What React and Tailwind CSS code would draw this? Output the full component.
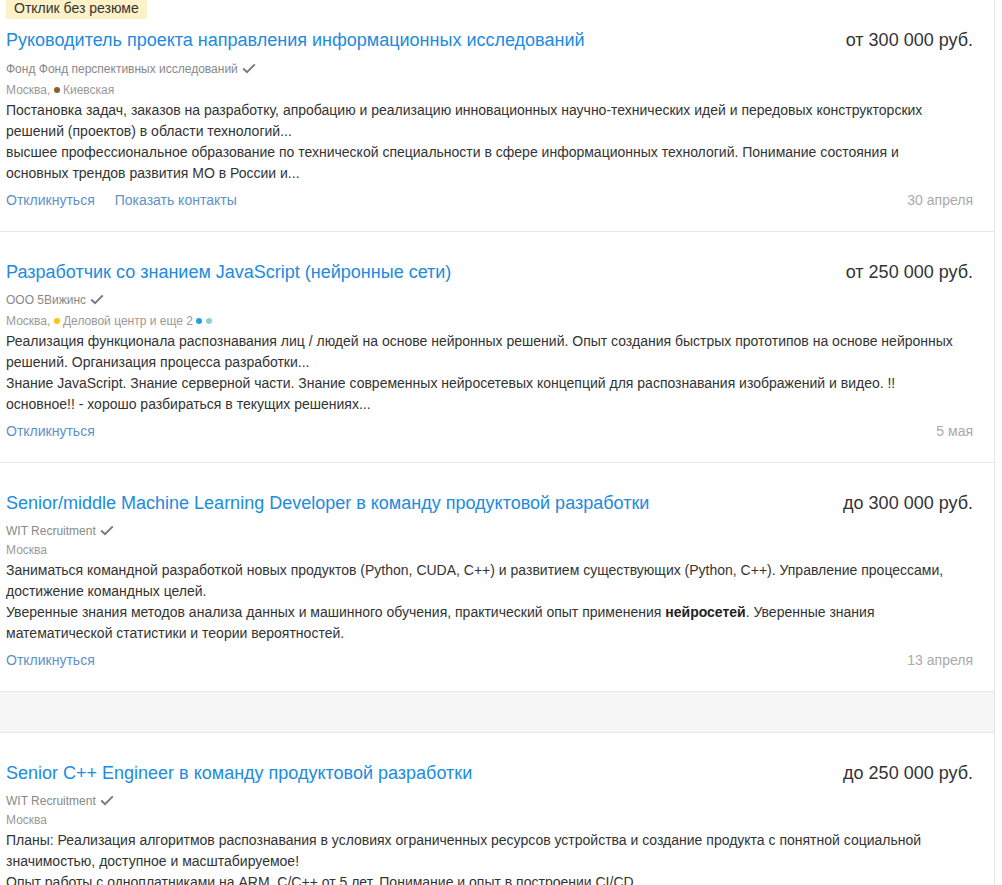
import React from 'react'

const font = { fontFamily: '"Liberation Sans", Arial, sans-serif' }

function Check() {
  return (
    <svg width="14" height="11" viewBox="0 0 14 11" className="inline-block ml-1 -mt-[2px] align-middle">
      <path d="M1.2 5.6 L5 9.2 L12.8 1.4" fill="none" stroke="#7b7b7b" strokeWidth="2" />
    </svg>
  )
}

function Dot({ color }) {
  return <span className={`inline-block w-1.5 h-1.5 rounded-full align-middle -mt-[2px] ${color}`} />
}

const vacancies = [
  {
    badge: true,
    title: 'Руководитель проекта направления информационных исследований',
    salary: 'от 300 000 руб.',
    company: 'Фонд Фонд перспективных исследований',
    location: (
      <>Москва, <Dot color="bg-[#8d5b2d]" /> Киевская</>
    ),
    metro: true,
    lines: [
      'Постановка задач, заказов на разработку, апробацию и реализацию инновационных научно-технических идей и передовых конструкторских',
      'решений (проектов) в области технологий...',
      'высшее профессиональное образование по технической специальности в сфере информационных технологий. Понимание состояния и',
      'основных трендов развития МО в России и...',
    ],
    contacts: true,
    date: '30 апреля',
  },
  {
    title: 'Разработчик со знанием JavaScript (нейронные сети)',
    salary: 'от 250 000 руб.',
    company: 'ООО 5Вижинс',
    location: (
      <>Москва, <Dot color="bg-[#ffc20e]" /> Деловой центр и еще 2 <Dot color="bg-[#1fa3e4]" /> <Dot color="bg-[#8fd0d4]" /></>
    ),
    metro: true,
    lines: [
      'Реализация функционала распознавания лиц / людей на основе нейронных решений. Опыт создания быстрых прототипов на основе нейронных',
      'решений. Организация процесса разработки...',
      'Знание JavaScript. Знание серверной части. Знание современных нейросетевых концепций для распознавания изображений и видео. !!',
      'основное!! - хорошо разбираться в текущих решениях...',
    ],
    date: '5 мая',
  },
  {
    title: 'Senior/middle Machine Learning Developer в команду продуктовой разработки',
    salary: 'до 300 000 руб.',
    company: 'WIT Recruitment',
    location: 'Москва',
    lines: [
      'Заниматься командной разработкой новых продуктов (Python, CUDA, C++) и развитием существующих (Python, C++). Управление процессами,',
      'достижение командных целей.',
      <>Уверенные знания методов анализа данных и машинного обучения, практический опыт применения <b className="font-bold text-[#222]">нейросетей</b>. Уверенные знания</>,
      'математической статистики и теории вероятностей.',
    ],
    date: '13 апреля',
    gapAfter: true,
  },
  {
    title: 'Senior C++ Engineer в команду продуктовой разработки',
    salary: 'до 250 000 руб.',
    company: 'WIT Recruitment',
    location: 'Москва',
    lines: [
      'Планы: Реализация алгоритмов распознавания в условиях ограниченных ресурсов устройства и создание продукта с понятной социальной',
      'значимостью, доступное и масштабируемое!',
      'Опыт работы с одноплатниками на ARM, C/C++ от 5 лет. Понимание и опыт в построении CI/CD',
      'процессов...',
    ],
    date: '10 апреля',
  },
]

function Vacancy({ v, first }) {
  return (
    <div className={`border-b border-[#e6e6e6] pl-[6px] pr-[21px] pb-[21px] ${first ? '' : 'pt-7'}`}>
      {v.badge && (
        <div className="block w-fit bg-[#fdf1c8] text-[#333] text-[14px] leading-4 px-2 pb-[3px]">Отклик без резюме</div>
      )}
      <div className={`flex items-start justify-between gap-6 ${first ? 'mt-[9px]' : ''}`}>
        <a className="text-[18px] leading-6 text-[#208be0]">{v.title}</a>
        <span className="text-[18px] leading-6 text-[#333] whitespace-nowrap">{v.salary}</span>
      </div>
      <div className={`text-[12px] leading-[18px] text-[#888] ${first ? 'mt-2' : 'mt-[7px]'}`}>
        {v.company}
        <Check />
      </div>
      <div className={`text-[12px] leading-5 text-[#999] ${v.metro ? 'mt-[2px]' : ''}`}>{v.location}</div>
      <div className="text-[14px] leading-[21px] text-[#333]">
        {v.lines.map((l, i) => (
          <div key={i} className="whitespace-nowrap">{l}</div>
        ))}
      </div>
      <div className="mt-[6px] flex items-center justify-between text-[14px] leading-5">
        <div className="flex gap-5 text-[#5d92c9]">
          <a>Откликнуться</a>
          {v.contacts && <a>Показать контакты</a>}
        </div>
        <span className="text-[#aaa]">{v.date}</span>
      </div>
    </div>
  )
}

export default function App() {
  return (
    <div className="h-[885px] overflow-hidden bg-white" style={font}>
      <div className="w-[995px] h-full border-r border-[#e6e6e6] bg-white">
        {vacancies.map((v, i) => (
          <React.Fragment key={i}>
            <Vacancy v={v} first={i === 0} />
            {v.gapAfter && <div className="h-[41px] bg-[#f7f7f7] border-b border-[#e6e6e6]" />}
          </React.Fragment>
        ))}
      </div>
    </div>
  )
}
